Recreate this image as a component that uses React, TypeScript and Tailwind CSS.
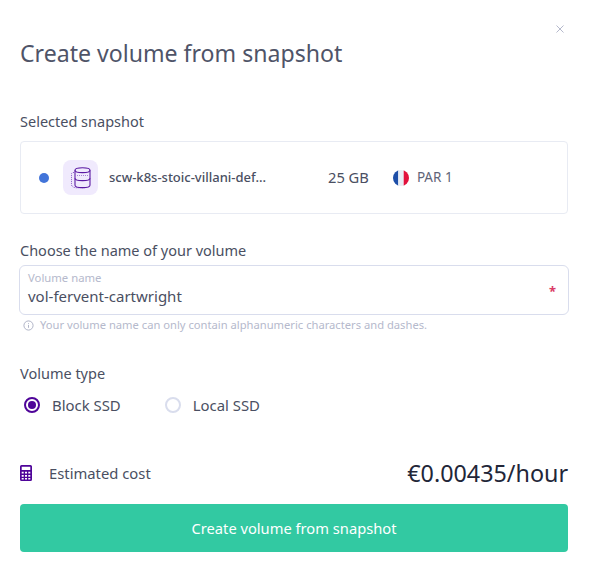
import React from "react";

function DbIcon() {
  return (
    <svg width="24" height="24" viewBox="0 0 24 24" fill="none">
      <path d="M5 6.500H4a1.500 1.500 0 0 0-1.500 1.500v10.500c0 2 2 3 4.500 3.300h9" stroke="#8c5cc9" strokeWidth="1" strokeDasharray="1 1" />
      <ellipse cx="13.500" cy="4.200" rx="7.500" ry="2.400" stroke="#5b1aa3" strokeWidth="1.100" />
      <path d="M6 4.200v15c0 1.300 3.400 2.400 7.500 2.400s7.500-1.100 7.500-2.400v-15" stroke="#5b1aa3" strokeWidth="1.100" />
      <path d="M6 12.200c0 1.300 3.400 2.400 7.500 2.400s7.500-1.100 7.500-2.400" stroke="#5b1aa3" strokeWidth="1.100" />
      <path d="M8 9.500h11" stroke="#a684d6" strokeWidth="1" strokeDasharray="1 1" />
    </svg>
  );
}

function Flag() {
  return (
    <svg width="16" height="16" viewBox="0 0 16 16">
      <defs>
        <clipPath id="flagclip"><circle cx="8" cy="8" r="8" /></clipPath>
      </defs>
      <g clipPath="url(#flagclip)">
        <rect x="0" y="0" width="5.300" height="16" fill="#1d4fa8" />
        <rect x="5.300" y="0" width="5.400" height="16" fill="#e8edf5" />
        <rect x="10.700" y="0" width="5.300" height="16" fill="#e2103c" />
      </g>
    </svg>
  );
}

function Calc() {
  return (
    <svg width="12" height="16" viewBox="0 0 12 16">
      <path fillRule="evenodd" fill="#4f0599" d="M1.500 0h9A1.500 1.500 0 0 1 12 1.500v13a1.500 1.500 0 0 1-1.500 1.500h-9A1.500 1.500 0 0 1 0 14.500v-13A1.500 1.500 0 0 1 1.500 0Zm.2 1.700v3.300h8.600V1.700H1.700Zm0 5v1.800h2V6.700h-2Zm3.300 0v1.800h2V6.700H5Zm3.300 0v1.800h2V6.700h-2Zm-6.600 3.200v1.800h2V9.900h-2Zm3.300 0v1.800h2V9.900H5Zm3.300 0v1.800h2V9.900h-2Zm-6.600 3v1.500h2v-1.500h-2Zm3.300 0v1.500h2v-1.500H5Zm3.300 0v1.500h2v-1.500h-2Z" />
    </svg>
  );
}

export default function App() {
  return (
    <div className="relative w-[594px] h-[566px] bg-white pl-5 pr-[26px] pt-[38px] text-[#4a4f62]" style={{ fontFamily: '"Noto Sans", sans-serif' }}>
      <button className="absolute left-[555px] top-[24px] w-[10px] h-[10px] text-[#b5b9cc]">
        <svg width="10" height="10" viewBox="0 0 10 10" stroke="currentColor" strokeWidth="1">
          <path d="M1.500 1.500l7 7M8.500 1.500l-7 7" />
        </svg>
      </button>
      <h1 className="text-[23.100px] leading-[30px] font-normal text-[#4f5468]">Create volume from snapshot</h1>

      <div className="mt-[43px] text-[14.500px] leading-[20px]">Selected snapshot</div>
      <div className="mt-[10px] h-[73px] flex items-center rounded border border-[#e8ebf3] pl-[18px]">
        <span className="w-[10px] h-[10px] rounded-full bg-[#4274d9]" />
        <span className="ml-[14px] w-[35px] h-[35px] rounded-lg bg-[#f0eafd] flex items-center justify-center"><DbIcon /></span>
        <span className="ml-[11px] w-[219px] text-[13px] font-medium whitespace-nowrap">scw-k8s-stoic-villani-def...</span>
        <span className="text-[14.700px]">25 GB</span>
        <span className="ml-[24px]"><Flag /></span>
        <span className="ml-2 text-[13.500px] text-[#5f6478]">PAR 1</span>
      </div>

      <div className="mt-[26px] text-[14.500px] leading-[20px]">Choose the name of your volume</div>
      <div className="mt-[5px] relative -ml-px -mr-px h-[50px] rounded-md border border-[#d9dded] px-2 pt-[5px]">
        <div className="text-[11.300px] leading-[14px] text-[#b5b9cc]">Volume name</div>
        <div className="text-[15px] leading-[20px] mt-px">vol-fervent-cartwright</div>
        <span className="absolute right-[12px] top-[16px] text-[13px] font-bold text-[#da3b66]">*</span>
      </div>
      <div className="mt-[2px] flex items-center gap-[6px] text-[11.200px] leading-[16px] text-[#b5b9cc]">
        <svg width="11" height="11" viewBox="0 0 12 12" fill="none" stroke="#a9adc2" strokeWidth="1" className="ml-[3px]">
          <circle cx="6" cy="6" r="5" />
          <path d="M6 5.500v3M6 3.500v1" />
        </svg>
        Your volume name can only contain alphanumeric characters and dashes.
      </div>

      <div className="mt-[30px] text-[14.500px] leading-[20px]">Volume type</div>
      <div className="mt-[12px] flex items-center h-[20px] pl-[4px] text-[14.900px]">
        <span className="w-4 h-4 rounded-full border-2 border-[#4f0599] flex items-center justify-center">
          <span className="w-2 h-2 rounded-full bg-[#4f0599]" />
        </span>
        <span className="ml-[12px]">Block SSD</span>
        <span className="ml-[44px] w-4 h-4 rounded-full border-2 border-[#d9dded]" />
        <span className="ml-[12px]">Local SSD</span>
      </div>

      <div className="mt-[41px] flex items-center justify-between h-[34px]">
        <div className="flex items-center">
          <Calc />
          <span className="ml-[17px] text-[14.800px]">Estimated cost</span>
        </div>
        <span className="text-[23.300px] font-normal text-[#222638]">€0.00435/hour</span>
      </div>
      <button className="mt-[14px] w-full h-[48px] rounded bg-[#32c9a2] text-white text-[14.700px] font-normal">Create volume from snapshot</button>
    </div>
  );
}
